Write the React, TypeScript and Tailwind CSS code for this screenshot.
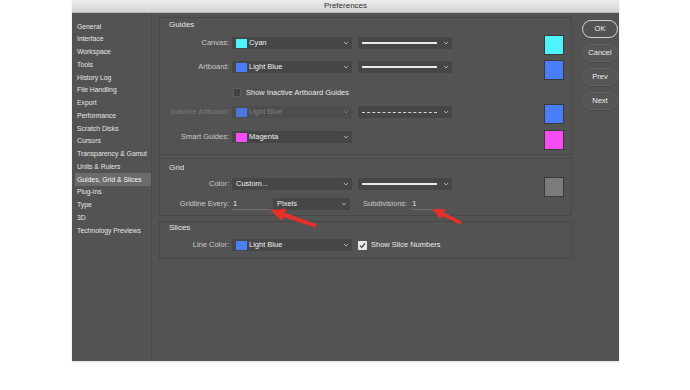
import React from "react";

const FONT = { fontFamily: '"Liberation Sans", Arial, sans-serif' };

const sidebarItems = [
  "General",
  "Interface",
  "Workspace",
  "Tools",
  "History Log",
  "File Handling",
  "Export",
  "Performance",
  "Scratch Disks",
  "Cursors",
  "Transparency & Gamut",
  "Units & Rulers",
  "Guides, Grid & Slices",
  "Plug-ins",
  "Type",
  "3D",
  "Technology Previews",
];

function Chevron({ dim = false }: { dim?: boolean }) {
  return (
    <svg width="6" height="4" viewBox="0 0 6 4" className="shrink-0">
      <path d="M0.8 0.8 L3 3 L5.2 0.8" fill="none" stroke={dim ? "#7a7a7a" : "#b5b5b5"} strokeWidth="0.9" />
    </svg>
  );
}

function Dropdown({
  swatch,
  text,
  width,
  dim = false,
}: {
  swatch?: string;
  text: string;
  width: string;
  dim?: boolean;
}) {
  return (
    <div
      className={`${width} h-[12px] flex items-center pl-[4px] pr-[3px] shrink-0 ${
        dim ? "bg-[#4d4d4d]" : "bg-[#464646]"
      }`}
    >
      {swatch && <div className="w-[11px] h-[9px] mr-[2px] shrink-0" style={{ background: swatch, opacity: dim ? 0.85 : 1 }} />}
      <span className={`text-[7.5px] leading-[12px] flex-1 ${dim ? "text-[#7d7d7d]" : "text-[#f0f0f0]"}`}>{text}</span>
      <Chevron dim={dim} />
    </div>
  );
}

function LineDropdown({ dashed = false }: { dashed?: boolean }) {
  return (
    <div className="ml-[6px] w-[94px] h-[12px] flex items-center pl-[4px] pr-[3px] bg-[#464646] shrink-0">
      <div className="flex-1 pr-[6px] flex items-center">
        {dashed ? (
          <div className="w-full h-[1px] border-t border-dashed border-[#d8d8d8]" />
        ) : (
          <div className="w-full h-[1.5px] bg-[#e8e8e8]" />
        )}
      </div>
      <Chevron />
    </div>
  );
}

function Label({ children, dim = false }: { children: React.ReactNode; dim?: boolean }) {
  return (
    <div
      className={`w-[69px] shrink-0 text-right text-[7.5px] leading-[12px] ${
        dim ? "text-[#7a7a7a]" : "text-[#c9c9c9]"
      }`}
    >
      {children}
    </div>
  );
}

function Swatch({ color, mt }: { color: string; mt: string }) {
  return <div className={`ml-auto mr-[7px] w-[20px] h-[20px] shrink-0 border border-[#3a3a3a] ${mt}`} style={{ background: color }} />;
}

function Checkbox({ checked = false }: { checked?: boolean }) {
  if (checked) {
    return (
      <div className="w-[9px] h-[9px] shrink-0 bg-[#e9e9e9] rounded-[1px] flex items-center justify-center">
        <svg width="7" height="7" viewBox="0 0 7 7">
          <path d="M1 3.6 L2.8 5.4 L6 1.4" fill="none" stroke="#3a3a3a" strokeWidth="1.3" />
        </svg>
      </div>
    );
  }
  return <div className="w-[8px] h-[9px] shrink-0 bg-[#424242] border border-[#5e5e5e]" />;
}

function arrowPoints(tip: [number, number], tail: [number, number], headLen: number, headW: number, shaftW: number) {
  const dx = tip[0] - tail[0];
  const dy = tip[1] - tail[1];
  const len = Math.hypot(dx, dy);
  const ux = dx / len;
  const uy = dy / len;
  const px = -uy;
  const py = ux;
  const bx = tip[0] - ux * headLen;
  const by = tip[1] - uy * headLen;
  const pts: [number, number][] = [
    tip,
    [bx + px * headW, by + py * headW],
    [bx + px * shaftW, by + py * shaftW],
    [tail[0] + px * shaftW * 0.8, tail[1] + py * shaftW * 0.8],
    [tail[0] - px * shaftW * 0.8, tail[1] - py * shaftW * 0.8],
    [bx - px * shaftW, by - py * shaftW],
    [bx - px * headW, by - py * headW],
  ];
  return pts.map((p) => `${p[0].toFixed(1)},${p[1].toFixed(1)}`).join(" ");
}

export default function App() {
  return (
    <div className="relative w-[690px] h-[390px] bg-white overflow-hidden" style={FONT}>
      <div className="ml-[72px] w-[547px] h-[361px] flex flex-col shadow-[0_1px_2px_rgba(0,0,0,0.12)]">
        {/* Title bar */}
        <div className="h-[13px] bg-gradient-to-b from-[#ececec] to-[#d5d5d5] border-b border-[#b9b9b9] flex items-center justify-center">
          <span className="text-[8px] leading-[12px] text-[#2f2f2f]">Preferences</span>
        </div>

        {/* Body */}
        <div className="flex-1 flex bg-[#535353]">
          {/* Sidebar */}
          <div className="w-[80px] shrink-0 border-r border-[#494949] pt-[7.4px] pl-[3px]">
            {sidebarItems.map((item) => {
              const sel = item === "Guides, Grid & Slices";
              return (
                <div
                  key={item}
                  className={`h-[12.75px] flex items-center pl-[2px] text-[6.8px] whitespace-nowrap ${
                    sel ? "bg-[#6b6b6b] text-[#f4f4f4]" : "text-[#e6e6e6]"
                  }`}
                >
                  {item}
                </div>
              );
            })}
          </div>

          {/* Content */}
          <div className="flex-1 flex pl-[7px] pt-[4px]">
            <div className="w-[413px] shrink-0 flex flex-col">
              {/* Guides */}
              <div className="border border-[#474747] pb-[11px]">
                <div className="h-[12px] mt-[1px] pl-[9px] text-[8px] leading-[12px] text-[#e6e6e6]">Guides</div>
                <div className="mt-[6px] h-[12px] flex items-start">
                  <Label>Canvas:</Label>
                  <div className="ml-[3px]">
                    <Dropdown swatch="#4ff4fb" text="Cyan" width="w-[120px]" />
                  </div>
                  <LineDropdown />
                  <Swatch color="#4ff4fb" mt="-mt-[2px]" />
                </div>
                <div className="mt-[12px] h-[12px] flex items-start">
                  <Label>Artboard:</Label>
                  <div className="ml-[3px]">
                    <Dropdown swatch="#4a7ef8" text="Light Blue" width="w-[120px]" />
                  </div>
                  <LineDropdown />
                  <Swatch color="#4a7ef8" mt="-mt-[1px]" />
                </div>
                <div className="mt-[14px] h-[11px] flex items-center pl-[73px]">
                  <Checkbox />
                  <span className="ml-[5px] text-[7.5px] leading-[11px] text-[#e8e8e8]">Show Inactive Artboard Guides</span>
                </div>
                <div className="mt-[8px] h-[12px] flex items-start">
                  <Label dim>Inactive Artboard:</Label>
                  <div className="ml-[3px]">
                    <Dropdown swatch="#4a7ef8" text="Light Blue" width="w-[120px]" dim />
                  </div>
                  <LineDropdown dashed />
                  <Swatch color="#4a7ef8" mt="-mt-[2px]" />
                </div>
                <div className="mt-[13px] h-[12px] flex items-start">
                  <Label>Smart Guides:</Label>
                  <div className="ml-[3px]">
                    <Dropdown swatch="#f64cf3" text="Magenta" width="w-[120px]" />
                  </div>
                  <Swatch color="#f64cf3" mt="-mt-[1px]" />
                </div>
              </div>

              {/* Grid */}
              <div className="mt-[3px] border border-[#474747] pt-[3px] pb-[5px]">
                <div className="h-[12px] pl-[9px] text-[8px] leading-[12px] text-[#e6e6e6]">Grid</div>
                <div className="mt-[4px] h-[12px] flex items-start">
                  <Label>Color:</Label>
                  <div className="ml-[3px]">
                    <Dropdown text="Custom..." width="w-[120px]" />
                  </div>
                  <LineDropdown />
                  <Swatch color="#7b7b7b" mt="-mt-[1px]" />
                </div>
                <div className="mt-[8px] h-[12px] flex items-start">
                  <Label>Gridline Every:</Label>
                  <div className="ml-[3px] w-[38px] h-[12px] border-b border-[#6c6c6c] pl-[1px] text-[7.5px] leading-[12px] text-[#e8e8e8]">
                    1
                  </div>
                  <div className="ml-[3px]">
                    <Dropdown text="Pixels" width="w-[77px]" />
                  </div>
                  <span className="ml-[13px] text-[7.5px] leading-[12px] text-[#c9c9c9]">Subdivisions:</span>
                  <div className="ml-[4px] w-[26px] h-[12px] border-b border-[#6c6c6c] pl-[1px] text-[7.5px] leading-[12px] text-[#e8e8e8]">
                    1
                  </div>
                </div>
              </div>

              {/* Slices */}
              <div className="mt-[5px] border border-[#474747] pb-[7px]">
                <div className="h-[12px] pl-[9px] text-[8px] leading-[12px] text-[#e6e6e6]">Slices</div>
                <div className="mt-[5px] h-[12px] flex items-center">
                  <Label>Line Color:</Label>
                  <div className="ml-[3px]">
                    <Dropdown swatch="#4a7ef8" text="Light Blue" width="w-[120px]" />
                  </div>
                  <div className="ml-[6px]">
                    <Checkbox checked />
                  </div>
                  <span className="ml-[4px] text-[7.5px] leading-[12px] text-[#e8e8e8]">Show Slice Numbers</span>
                </div>
              </div>
            </div>

            {/* Buttons */}
            <div className="ml-[10px] w-[36px] shrink-0 flex flex-col gap-[6px] pt-[3px]">
              <div className="h-[18px] rounded-full border border-[#d2d2d2] flex items-center justify-center text-[7.5px] text-[#f2f2f2]">
                OK
              </div>
              {["Cancel", "Prev", "Next"].map((b) => (
                <div
                  key={b}
                  className="h-[18px] rounded-full border border-[#616161] bg-[#565656] shadow-[0_0.5px_1px_rgba(0,0,0,0.25)] flex items-center justify-center text-[7.5px] text-[#ececec]"
                >
                  {b}
                </div>
              ))}
            </div>
          </div>
        </div>
      </div>

      {/* Red annotation arrows */}
      <svg className="absolute inset-0 pointer-events-none" width="690" height="390" viewBox="0 0 690 390">
        <polygon points={arrowPoints([270, 210], [316, 226], 15, 6.5, 2.2)} fill="#e8302a" />
        <polygon points={arrowPoints([432, 209], [461, 223], 12, 5.5, 2)} fill="#e8302a" />
      </svg>
    </div>
  );
}
